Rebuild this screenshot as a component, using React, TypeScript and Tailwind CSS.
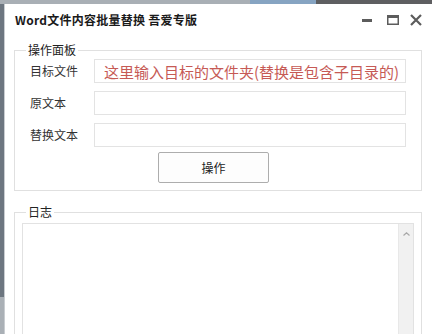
export default function App() {
  return (
    <div className="w-[432px] h-[334px] overflow-hidden bg-[#6f7780] flex flex-col font-['Noto_Sans_CJK_SC','Noto_Sans',sans-serif]">
      {/* desktop strip behind the window */}
      <div className="h-[4px] flex shrink-0">
        <div className="w-[250px] bg-[#a9afb5]" />
        <div className="w-[66px] bg-[#86a4c2]" />
        <div className="flex-1 bg-[#5e5f61]" />
      </div>
      <div className="flex flex-1 min-h-0">
        <div className="w-[4px] flex flex-col shrink-0">
          <div className="h-[293px] bg-[#6d7680]" />
          <div className="flex-1 bg-[#aab0b6]" />
        </div>
        <div className="flex-1 bg-white border-l border-[#c9cdd1] flex flex-col pl-[9px] pr-[10px]">
          {/* title bar */}
          <div className="h-[32px] flex items-center shrink-0">
            <span className="pl-[1px] text-[12px] font-bold tracking-[0.25px] text-[#1a1a1a] leading-none">Word文件内容批量替换 吾爱专版</span>
            <div className="ml-auto flex items-center">
              <svg width="10" height="3" viewBox="0 0 10 3">
                <rect x="0" y="0" width="10" height="3" fill="#5c5c5c" />
              </svg>
              <svg className="ml-[15px]" width="12" height="10" viewBox="0 0 12 10">
                <rect x="0.75" y="0.75" width="10.5" height="8.5" fill="none" stroke="#5c5c5c" strokeWidth="1.5" />
                <rect x="0" y="0" width="12" height="3" fill="#5c5c5c" />
              </svg>
              <svg className="ml-[11px]" width="12" height="12" viewBox="0 0 12 12">
                <path d="M1 1 L11 11 M11 1 L1 11" stroke="#5c5c5c" strokeWidth="2.2" />
              </svg>
            </div>
          </div>

          {/* 操作面板 */}
          <fieldset className="mt-[6px] border border-[#e0e0e0] p-0 min-w-0 shrink-0">
            <legend className="ml-[11px] px-[2px] text-[12px] leading-[16px] text-[#222]">操作面板</legend>
            <div className="px-[15px] pt-[1px] pb-[7px] flex flex-col">
              <div className="flex flex-col gap-[8px]">
                <div className="flex items-center">
                  <span className="w-[64px] text-[12px] text-[#333]">目标文件</span>
                  <div className="flex-1 h-[24px] border border-[#e3e3e3] flex items-center pl-[9px]">
                    <span className="text-[15px] leading-none text-[#c65a55] whitespace-nowrap">这里输入目标的文件夹(替换是包含子目录的)</span>
                  </div>
                </div>
                <div className="flex items-center">
                  <span className="w-[64px] text-[12px] text-[#333]">原文本</span>
                  <div className="flex-1 h-[24px] border border-[#e3e3e3]" />
                </div>
                <div className="flex items-center">
                  <span className="w-[64px] text-[12px] text-[#333]">替换文本</span>
                  <div className="flex-1 h-[24px] border border-[#e3e3e3]" />
                </div>
              </div>
              <button className="mt-[5px] ml-[128px] w-[111px] h-[31px] border border-[#adadad] rounded-[2px] bg-[#fdfdfd] text-[12px] text-[#222]">
                操作
              </button>
            </div>
          </fieldset>

          {/* 日志 */}
          <fieldset className="mt-[13px] border border-[#e0e0e0] p-0 min-w-0 shrink-0">
            <legend className="ml-[11px] px-[2px] text-[12px] leading-[16px] text-[#222]">日志</legend>
            <div className="px-[7px] pt-[3px]">
              <div className="h-[200px] border border-[#e2e2e2] flex">
                <div className="flex-1" />
                <div className="w-[15px] bg-[#f1f1f1] border-l border-[#e8e8e8] flex justify-center">
                  <svg className="mt-[8px]" width="7" height="4" viewBox="0 0 7 4">
                    <path d="M0.5 3.5 L3.5 0.8 L6.5 3.5" fill="none" stroke="#a8a8a8" strokeWidth="1.2" />
                  </svg>
                </div>
              </div>
            </div>
          </fieldset>
        </div>
      </div>
    </div>
  );
}
